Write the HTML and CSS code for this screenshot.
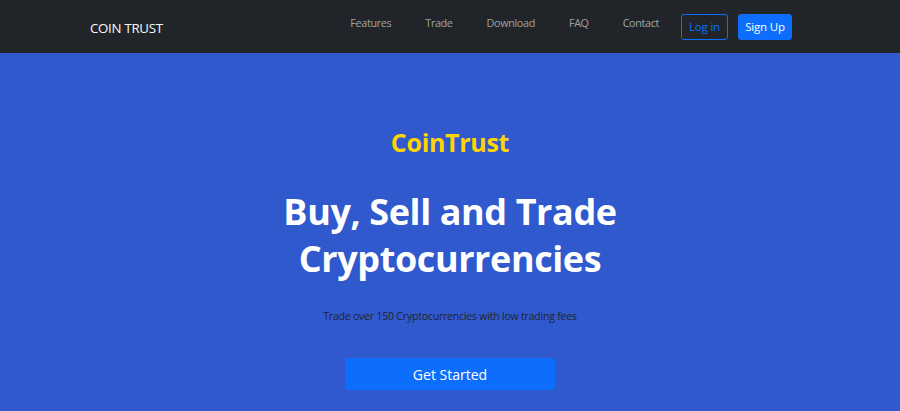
FILE: index.html
```html
<!DOCTYPE html>
<html lang="en">
<head>
<meta charset="utf-8">
<title>Coin Trust</title>
<link rel="stylesheet" href="styles.css">
</head>
<body>
<nav class="navbar">
  <a class="brand" href="#">COIN TRUST</a>
  <div class="nav-right">
    <ul class="links">
      <li><a href="#">Features</a></li>
      <li><a href="#">Trade</a></li>
      <li><a href="#">Download</a></li>
      <li><a href="#">FAQ</a></li>
      <li><a href="#">Contact</a></li>
    </ul>
    <a class="btn btn-outline" href="#">Log in</a>
    <a class="btn btn-primary" href="#">Sign Up</a>
  </div>
</nav>
<section class="hero">
  <h2 class="kicker">CoinTrust</h2>
  <h1 class="title">Buy, Sell and Trade<br>Cryptocurrencies</h1>
  <p class="lead">Trade over 150 Cryptocurrencies with low trading fees</p>
  <a class="btn-start" href="#">Get Started</a>
</section>
</body>
</html>
```
FILE: styles.css
```css
* { box-sizing: border-box; }
html, body { margin: 0; padding: 0; }
body {
  font-family: "Open Sans", "Noto Sans", sans-serif;
  background: #3059cd;
  overflow: hidden;
}
a { text-decoration: none; }
.navbar {
  height: 53px;
  background: #212529;
  display: flex;
  align-items: center;
  justify-content: space-between;
  padding: 0 108px 0 90px;
}
.brand {
  color: #f8f9fa;
  font-size: 13.3px;
  letter-spacing: -0.3px;
  margin-top: 2px;
  white-space: nowrap;
}
.nav-right {
  display: flex;
  align-items: center;
}
.links {
  list-style: none;
  margin: 0 22px 0 0;
  padding: 0;
  display: flex;
  gap: 34px;
}
.links a {
  color: rgba(255, 255, 255, 0.58);
  font-size: 10.8px;
  letter-spacing: -0.35px;
  position: relative;
  top: -6px;
  white-space: nowrap;
}
.btn {
  display: inline-flex;
  align-items: center;
  justify-content: center;
  height: 26px;
  border-radius: 3px;
  font-size: 11.5px;
  padding: 0;
  letter-spacing: -0.2px;
  white-space: nowrap;
}
.btn-outline {
  border: 1px solid #0d6efd;
  color: #0d6efd;
  width: 47px;
  margin-right: 10px;
}
.btn-primary {
  background: #0d6efd;
  color: #fff;
  border: 1px solid #0d6efd;
  width: 54px;
}
.hero {
  display: flex;
  flex-direction: column;
  align-items: center;
  text-align: center;
  padding-top: 73px;
}
.kicker {
  margin: 0;
  color: #ffd500;
  font-size: 25px;
  font-weight: 700;
  line-height: 32px;
  letter-spacing: -0.3px;
}
.title {
  margin: 30px 0 0;
  color: #fff;
  font-size: 36px;
  font-weight: 700;
  line-height: 47px;
  letter-spacing: -0.4px;
}
.lead {
  margin: 27px 0 0;
  color: #212529;
  font-size: 10.5px;
  letter-spacing: -0.2px;
}
.btn-start {
  margin-top: 35px;
  width: 210px;
  height: 32px;
  background: #0d6efd;
  color: #fff;
  border-radius: 3px;
  display: flex;
  align-items: center;
  justify-content: center;
  font-size: 14px;
}
```
